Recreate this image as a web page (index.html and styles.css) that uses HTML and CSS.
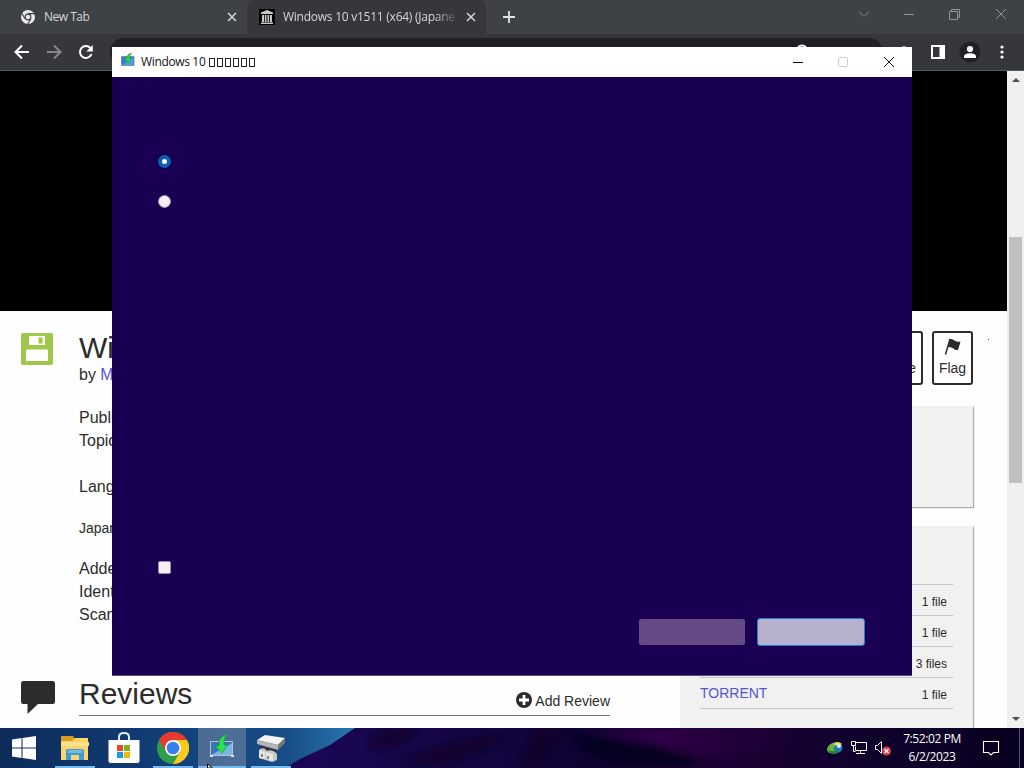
FILE: index.html
```html
<!DOCTYPE html>
<html lang="en">
<head>
  <meta charset="UTF-8">
  <title>Windows 10 Setup</title>
  <link rel="stylesheet" href="styles.css">
</head>
<body>

<div class="browser">
  <div class="tabs">
    <div class="tab">
      <svg class="favicon" width="16" height="16" viewBox="0 0 16 16"><circle cx="8" cy="8" r="7" fill="#e8eaed"/><circle cx="8" cy="8" r="3.4" fill="#3c4043"/><circle cx="8" cy="8" r="2.3" fill="#e8eaed"/><path d="M8 4.6h6.6M5 9.7L1.8 4.2M11 9.7l-3.3 5.6" stroke="#3c4043" stroke-width="1.1"/></svg>
      <span class="tab-title">New Tab</span>
      <svg width="10" height="10" viewBox="0 0 10 10"><path d="M1 1l8 8M9 1L1 9" stroke="#d5d7d9" stroke-width="1.5"/></svg>
    </div>
    <div class="tab active">
      <svg class="favicon" width="16" height="16" viewBox="0 0 16 16"><path fill="#000" d="M0 0h16v16H0z"/><path fill="#c8c8c8" d="M8 1l6 2.5V5H2V3.500zM3 6h2v7H3zM5.800 6h1.700v7H5.800zM8.500 6h1.700v7H8.500zM11 6h2v7h-2zM2 13.500h12V15H2z"/></svg>
      <span class="tab-title fade">Windows 10 v1511 (x64) (Japane</span>
      <svg width="10" height="10" viewBox="0 0 10 10"><path d="M1 1l8 8M9 1L1 9" stroke="#d5d7d9" stroke-width="1.500"/></svg>
    </div>
    <svg class="new-tab" width="12" height="12" viewBox="0 0 12 12"><path d="M6 0v12M0 6h12" stroke="#e2e4e6" stroke-width="1.800"/></svg>
    <div class="window-buttons">
      <svg width="10" height="10" viewBox="0 0 10 10"><path d="M0 2.500l5 5 5-5" fill="none" stroke="#85888a"/></svg>
      <svg width="10" height="10" viewBox="0 0 10 10"><path d="M0 5.500h10" stroke="#929597"/></svg>
      <svg width="11" height="11" viewBox="0 0 11 11"><path d="M.5 2.500h8v8h-8zM2.500 2.500v-2h8v8h-2" fill="none" stroke="#929597"/></svg>
      <svg width="12" height="12" viewBox="0 0 12 12"><path d="M1 1l10 10M11 1L1 11" stroke="#929597"/></svg>
    </div>
  </div>

  <div class="toolbar">
    <svg width="16" height="16" viewBox="0 0 16 16"><path d="M15 8H2M8 1.500L1.500 8 8 14.500" fill="none" stroke="#fff" stroke-width="2"/></svg>
    <svg width="16" height="16" viewBox="0 0 16 16"><path d="M1 8h13M8 1.500L14.500 8 8 14.500" fill="none" stroke="#85888b" stroke-width="2"/></svg>
    <svg width="16" height="16" viewBox="0 0 16 16"><path d="M13.500 10.200A6 6 0 1 1 12.500 4" fill="none" stroke="#fff" stroke-width="2"/><path d="M14.800 1v6.500H8.300z" fill="#fff"/></svg>
    <div class="address">
      <svg width="14" height="14" viewBox="0 0 14 14"><circle cx="7" cy="7" r="5.500" fill="none" stroke="#fff" stroke-width="2"/></svg>
    </div>
    <svg class="extensions" width="16" height="16" viewBox="0 0 16 16"><path d="M1 4h4a2 2 0 0 1 4 0h4v4a2 2 0 0 1 0 4v3H1z" fill="#dfe1e4"/></svg>
    <svg width="14" height="14" viewBox="0 0 14 14"><path d="M1 1h12v12H1z" fill="none" stroke="#fff" stroke-width="2"/><path d="M8.500 1H13v12H8.500z" fill="#fff"/></svg>
    <svg class="profile" width="22" height="22" viewBox="0 0 22 22"><circle cx="11" cy="11" r="10.500" fill="#202124"/><circle cx="11" cy="8" r="3.100" fill="#fff"/><path d="M5 17v-1.500c0-2.200 3-3.300 6-3.300s6 1.100 6 3.300V17z" fill="#fff"/></svg>
    <svg class="menu" width="4" height="14" viewBox="0 0 4 14"><circle cx="2" cy="2" r="1.600" fill="#fff"/><circle cx="2" cy="7" r="1.600" fill="#fff"/><circle cx="2" cy="12" r="1.600" fill="#fff"/></svg>
  </div>

  <div class="viewport">
    <div class="page">
      <div class="player"></div>
      <div class="columns">
        <div class="main">
          <svg class="floppy" width="32" height="32" viewBox="0 0 32 32"><rect width="32" height="32" rx="2" fill="#a0c64a"/><path d="M8 3h16v9H8zM5 17.500q0-1 1-1h20q1 0 1 1V28H5z" fill="#fff"/><path d="M17.500 4.500h4v6h-4z" fill="#a0c64a"/></svg>
          <div class="details">
            <h1>Wi</h1>
            <p class="byline">by <a>M</a></p>
            <p>Publi</p>
            <p>Topic</p>
            <p class="language">Lang</p>
            <p class="description">Japan</p>
            <p>Adde</p>
            <p>Ident</p>
            <p>Scan</p>
          </div>
          <svg class="bubble" width="36" height="34" viewBox="0 0 36 34"><path d="M2.500 0h29q2.500 0 2.500 2.500v18q0 2.500-2.500 2.500H17L6.500 33V23h-4Q0 23 0 20.500v-18Q0 0 2.500 0z" fill="#2c2c2c"/></svg>
          <div class="reviews">
            <h1>Reviews</h1>
            <div class="add-review">
              <svg width="16" height="16" viewBox="0 0 16 16"><circle cx="8" cy="8" r="8" fill="#2c2c2c"/><path d="M8 3v10M3 8h10" stroke="#fff" stroke-width="2.800"/></svg>
              <span>Add Review</span>
            </div>
          </div>
        </div>
        <div class="side">
          <div class="actions">
            <div class="action favorite">e</div>
            <div class="action">
              <svg width="18" height="18" viewBox="0 0 18 18"><path d="M6 1L1.500 16.500" stroke="#2c2c2c" stroke-width="1.500"/><path d="M6 1q2.500-.5 4.500 1.500 2 1.800 6 1.200L14 12q-2.700.5-4.700-1.500Q7 8.500 3.700 9z" fill="#2c2c2c"/></svg>
              <span>Flag</span>
            </div>
          </div>
          <div class="panel views"></div>
          <div class="panel downloads">
            <div class="row">1 file</div>
            <div class="row">1 file</div>
            <div class="row">3 files</div>
            <div class="row last"><a>TORRENT</a><span>1 file</span></div>
          </div>
        </div>
        <span class="speck"></span>
      </div>
    </div>
    <div class="scrollbar">
      <span class="arrow up"></span>
      <span class="thumb"></span>
      <span class="arrow down"></span>
    </div>
  </div>
</div>

<div class="dialog">
  <div class="titlebar">
    <svg width="14" height="14" viewBox="0 0 14 14"><path d="M.5 3.500h12.500v9H.5z" fill="#2f7fcb" stroke="#6f93b5"/><path d="M1 12l11-7v7z" fill="#4fa3dc"/><path d="M10.500 0Q6 1 6 5H3.500l3.500 5 3.500-4.500H8.500Q8.500 2 10.500 0z" fill="#35d04a" stroke="#21923a" stroke-width=".5"/></svg>
    <span class="caption">Windows 10</span>
    <span class="boxes"><i></i><i></i><i></i><i></i><i></i><i></i></span>
    <div class="caption-buttons">
      <svg width="10" height="12" viewBox="0 0 10 12"><path d="M0 6.500h10" stroke="#000"/></svg>
      <svg width="10" height="12" viewBox="0 0 10 12"><rect x=".5" y="1.500" width="9" height="9" rx="1" fill="none" stroke="#ccc"/></svg>
      <svg width="12" height="12" viewBox="0 0 12 12"><path d="M1 1l10 10M11 1L1 11" stroke="#111"/></svg>
    </div>
  </div>
  <div class="dialog-body">
    <span class="radio checked"></span>
    <span class="radio"></span>
    <span class="checkbox"></span>
    <div class="dialog-buttons">
      <span class="btn back"></span>
      <span class="btn next"></span>
    </div>
  </div>
</div>

<div class="taskbar">
  <svg class="wallpaper" width="1024" height="40" viewBox="0 0 1024 40">
    <defs>
      <linearGradient id="sky"><stop offset="0" stop-color="#0c2b59"/><stop offset=".45" stop-color="#123e77"/><stop offset=".8" stop-color="#184d87"/><stop offset="1" stop-color="#2a7ab2"/></linearGradient>
      <linearGradient id="rock"><stop offset="0" stop-color="#1c0759"/><stop offset=".18" stop-color="#160648"/><stop offset=".3" stop-color="#13043f"/><stop offset=".42" stop-color="#0d0230"/><stop offset=".52" stop-color="#1c0036"/><stop offset=".62" stop-color="#1b0035"/><stop offset=".78" stop-color="#0f022c"/><stop offset="1" stop-color="#080020"/></linearGradient>
      <linearGradient id="glow"><stop offset="0" stop-color="#2c004b" stop-opacity="0"/><stop offset=".4" stop-color="#300047"/><stop offset="1" stop-color="#26003d" stop-opacity="0"/></linearGradient>
      <filter id="soft" x="-10%" y="-30%" width="120%" height="160%"><feGaussianBlur stdDeviation="4"/></filter>
    </defs>
    <path d="M0 0h360v40H0z" fill="url(#sky)"/>
    <path d="M285 40L300 31 330 17 355 0H1024V40z" fill="url(#rock)"/>
    <g filter="url(#soft)">
      <path d="M560 0h240v16l-100 12-50-13z" fill="url(#glow)"/>
      <path d="M370 8l25-8h25l-22 18-28 4zM400 32l55-18 60-9-35 20-45 15zM515 40l20-40h32l-12 12-15 28z" fill="#0b0225" opacity=".75"/>
      <path d="M570 4l90 14 40 12-10 10h-65l-45-20z" fill="#07021d" opacity=".75"/>
    </g>
  </svg>

  <div class="apps">
    <div class="app">
      <svg width="24" height="24" viewBox="0 0 24 24"><path d="M0 3.500L9.500 2v9.500H0zM10.500 1.900L24 0v11.500H10.500zM0 12.500h9.500V22L0 20.500zM10.500 12.500H24V24l-13.500-1.900z" fill="#fff"/></svg>
    </div>
    <div class="app running">
      <svg width="30" height="26" viewBox="0 0 30 26"><path d="M1 1h12l2 3h13v5H1z" fill="#d69b23"/><path d="M1 6h11l3-3h13v22H1z" fill="#fbd56b"/><path d="M1 7h28v4H1z" fill="#ffe08a"/><path d="M6 25v-9q0-2 2-2h14q2 0 2 2v9h-5v-5h-8v5z" fill="#3f9bd8"/><path d="M8 15h14v3H8z" fill="#78b9e4"/></svg>
    </div>
    <div class="app">
      <svg width="32" height="32" viewBox="0 0 32 32"><path d="M11 9V5q0-4 5-4t5 4v4" fill="none" stroke="#d9ecf8" stroke-width="2"/><path d="M.5 8h31v21q0 2-2 2h-27q-2 0-2-2z" fill="#fff"/><path d="M9 13h6v6H9z" fill="#e74c24"/><path d="M16 13h6v6h-6z" fill="#76b51b"/><path d="M9 20h6v6H9z" fill="#159ee5"/><path d="M16 20h6v6h-6z" fill="#f6b411"/></svg>
    </div>
    <div class="app running">
      <svg width="32" height="32" viewBox="0 0 32 32"><circle cx="16" cy="16" r="16" fill="#2f9e4a"/><path d="M16 8h13.900A16 16 0 0 1 16 32l7-12z" fill="#fcc91f"/><path d="M2.100 8L9 20l7-12h13.900A16 16 0 0 0 2.100 8z" fill="#e33b2e"/><circle cx="16" cy="16" r="8" fill="#fff"/><circle cx="16" cy="16" r="6.300" fill="#3b7ded"/></svg>
    </div>
    <div class="app running current">
      <svg width="26" height="26" viewBox="0 0 26 26"><path d="M1.500 8.500h22v14h-22z" fill="#3975b8" stroke="#b6c4d1"/><path d="M2 22L23 10v12z" fill="#79b6e5"/><path d="M1 22h3v2H1zM22 22h3v2h-3z" fill="#dce4ea"/><path d="M18 1Q9 4 10 13H6l7 7 6-8h-4Q14 6 18 1z" fill="#2ce34e" stroke="#169b36" stroke-width=".7"/></svg>
    </div>
    <div class="app running">
      <svg width="30" height="28" viewBox="0 0 30 28"><path d="M1 6L9 1l20 3-7 7z" fill="#f3f3f1"/><path d="M1 6l21 5v5L1 10z" fill="#b5b5b3"/><path d="M22 11l7-7v5l-7 7z" fill="#777"/><path d="M5 12l16 4v2L5 15z" fill="#353535"/><path d="M3 16q3-3 6-1l2 2q4-2 8 1l2 2v6l-5 2-13-4z" fill="#c9c9c5"/><path d="M3 16l6 2v7l-6-1zM10 18l7 2v7l-7-2z" fill="#e7e6e1"/><path d="M6 20v3M12 22v3" stroke="#666" stroke-width="1.500"/></svg>
    </div>
  </div>

  <div class="tray">
    <svg width="18" height="16" viewBox="0 0 18 16"><ellipse cx="10" cy="7.500" rx="6.500" ry="5.500" fill="#247bc4"/><path d="M1 10q0-5 6-7l4 1-4 4 3 5q-7 2-9-3z" fill="#68b83d"/><path d="M7 4q5-4 9 0l-4 2z" fill="#f1db54"/><path d="M2 10q5 3 12-1l-4 5q-6 0-8-4z" fill="#207f35"/><circle cx="13" cy="6" r="2" fill="#d8edf6"/></svg>
    <svg width="18" height="16" viewBox="0 0 18 16"><path d="M5.500 2.500h11v8h-11v-4M10.500 10.500v3M6 13.500h9M1.500 1.500h4v4h-4zM3.500 5.500v6h2" fill="none" stroke="#fff"/></svg>
    <svg width="18" height="16" viewBox="0 0 18 16"><path d="M1.500 5.500h2l4-4v12l-4-4h-2z" fill="none" stroke="#fff"/><circle cx="12.500" cy="11" r="4.500" fill="#d64047"/><path d="M10.500 9l4 4M14.500 9l-4 4" stroke="#fff" stroke-width="1.300"/></svg>
    <div class="clock"><span>7:52:02 PM</span><span>6/2/2023</span></div>
    <svg class="notifications" width="18" height="18" viewBox="0 0 18 18"><path d="M1.500 2.500h15v11h-5L9 16l-2.500-2.500h-5z" fill="none" stroke="#fff" stroke-width="1.100"/></svg>
  </div>
  <span class="show-desktop"></span>
  <svg class="cursor" width="8" height="4" viewBox="0 0 8 4"><path d="M.5 0v4h5z" fill="#fff" stroke="#000"/></svg>
</div>

</body>
</html>
```
FILE: styles.css
```css
* {
  box-sizing: border-box;
}
body {
  margin: 0;
  width: 1024px;
  height: 768px;
  overflow: hidden;
  position: relative;
  display: flex;
  flex-direction: column;
  font-family: "Liberation Sans", Arial, sans-serif;
  color: #2c2c2c;
}
svg {
  display: block;
  flex: none;
}
h1, p {
  margin: 0;
  font-weight: normal;
}
a {
  color: #5257d6;
}

/* browser */
.browser {
  height: 728px;
  display: flex;
  flex-direction: column;
}
.tabs {
  height: 34px;
  flex: none;
  display: flex;
  align-items: center;
  background: #3e4245;
}
.tab {
  width: 247px;
  height: 34px;
  padding: 0 10px 0 20px;
  display: flex;
  align-items: center;
}
.tab.active {
  width: 239px;
  padding: 0 10px 0 12px;
  background: #36373a;
  border-radius: 8px 8px 0 0;
}
.tab-title {
  flex: 1;
  margin-left: 8px;
  padding-bottom: 1px;
  font: 12px "Open Sans", sans-serif;
  letter-spacing: -0.25px;
  color: #d5d7d9;
  white-space: nowrap;
}
.tab:first-child .tab-title {
  letter-spacing: -0.5px;
}
.fade {
  -webkit-mask-image: linear-gradient(90deg, #000 150px, transparent 177px);
  mask-image: linear-gradient(90deg, #000 150px, transparent 177px);
}
.new-tab {
  margin-left: 17px;
}
.window-buttons {
  margin-left: auto;
  padding: 0 17px 6px 0;
  display: flex;
  align-items: center;
  gap: 35px;
}
.toolbar {
  height: 37px;
  flex: none;
  padding: 0 19px 0 14px;
  display: flex;
  align-items: center;
  gap: 16px;
  background: #36373a;
  border-bottom: 1px solid #55575a;
}
.address {
  width: 773px;
  height: 28px;
  flex: none;
  padding: 6px 0 0 685px;
  border-radius: 14px;
  background: #202124;
}
.extensions {
  margin-left: -2px;
  margin-right: 2px;
}
.profile {
  margin: 0 4px 0 -2px;
}
.menu {
  margin-left: -1px;
}
.viewport {
  flex: 1;
  min-height: 0;
  display: flex;
}
.page {
  width: 1007px;
  overflow: hidden;
  background: #fefefe;
}
.player {
  height: 240px;
  background: #000;
}
.columns {
  display: flex;
  padding-top: 20px;
}
.main {
  width: 680px;
  display: grid;
  grid-template-columns: 58px 531px;
  grid-template-rows: 344px auto;
  padding-left: 21px;
}
.floppy {
  margin-top: 2px;
}
.bubble {
  margin-top: 6px;
}
h1 {
  font-size: 30px;
  line-height: 34px;
}
.details h1 {
  line-height: 33px;
  margin-bottom: 1px;
}
.details p {
  font-size: 16px;
  line-height: 23px;
}
.details .byline {
  line-height: 20px;
  margin-bottom: 21px;
}
.details .language {
  margin-top: 23px;
}
.details .description {
  margin: 19px 0 17px;
  font-size: 14px;
}
.reviews {
  height: 41px;
  display: flex;
  justify-content: space-between;
  border-bottom: 1px solid #777;
  padding-top: 2px;
}
.add-review {
  display: flex;
  align-items: center;
  gap: 3px;
  height: 16px;
  margin-top: 15px;
  font-size: 14px;
}
.add-review span {
  padding-top: 1px;
}
.side {
  width: 293px;
}
.actions {
  display: flex;
  justify-content: flex-end;
  gap: 9px;
}
.action {
  width: 41px;
  height: 54px;
  display: flex;
  flex-direction: column;
  align-items: center;
  padding-top: 5px;
  border: 2px solid #2c2c2c;
  border-radius: 3px;
  font-size: 14px;
}
.action span {
  margin-top: 4px;
}
.favorite {
  align-items: flex-end;
  padding: 27px 5px 0 0;
}
.panel {
  background: #f1f1f1;
  box-shadow: 1px 1px 1px #aaa;
}
.views {
  height: 101px;
  margin-top: 21px;
}
.downloads {
  height: 220px;
  margin-top: 19px;
  padding: 58px 20px 0;
}
.row {
  height: 31px;
  display: flex;
  justify-content: flex-end;
  align-items: center;
  padding: 4px 6px 0 0;
  border-top: 1px solid #c5c5c5;
  font-size: 12px;
}
.last {
  height: 32px;
  border-bottom: 1px solid #c5c5c5;
}
.last a {
  margin: 0 auto 5px 0;
  font-size: 14px;
}
.speck {
  width: 1px;
  height: 1px;
  margin: 8px 0 0 15px;
  background: #444;
}
.scrollbar {
  width: 17px;
  display: flex;
  flex-direction: column;
  align-items: center;
  background: #f0f0f0;
}
.thumb {
  width: 13px;
  height: 246px;
  margin-top: 155px;
  background: #c0c0c0;
}
.arrow {
  border: 4px solid transparent;
}
.up {
  margin-top: 3px;
  border-bottom-color: #505050;
}
.down {
  margin-top: auto;
  margin-bottom: 3px;
  border-top-color: #505050;
}

/* setup window */
.dialog {
  position: absolute;
  left: 112px;
  top: 47px;
  width: 800px;
  height: 628px;
  box-shadow: 0 1px 0 #5b4a7c;
}
.titlebar {
  height: 30px;
  padding: 0 17px 0 9px;
  display: flex;
  align-items: center;
  background: #fff;
}
.titlebar > svg {
  margin-bottom: 4px;
}
.caption {
  margin-left: 6px;
  padding-bottom: 1px;
  font: 12px "Open Sans", sans-serif;
  letter-spacing: -0.35px;
  color: #111;
}
.boxes {
  display: flex;
  gap: 2px;
  margin: 0 0 0 4px;
}
.boxes i {
  width: 6px;
  height: 9px;
  border: 1px solid #222;
}
.caption-buttons {
  margin-left: auto;
  padding-bottom: 1px;
  display: flex;
  gap: 35px;
}
.dialog-body {
  height: 598px;
  padding: 78px 47px 29px 46px;
  display: flex;
  flex-direction: column;
  background: #190052;
}
.radio {
  width: 13px;
  height: 13px;
  border: 1px solid #9c8daf;
  border-radius: 50%;
  background: #f5eff5;
}
.radio.checked {
  margin-bottom: 27px;
  border: 4px solid #0c60b4;
  background: #fff;
}
.checkbox {
  width: 13px;
  height: 13px;
  margin-top: auto;
  border: 1px solid #9c8daf;
  border-radius: 2px;
  background: #f5eff5;
}
.dialog-buttons {
  display: flex;
  justify-content: flex-end;
  align-items: center;
  gap: 12px;
  margin-top: 44px;
}
.btn {
  width: 106px;
  height: 26px;
  border-radius: 2px;
  background: #644b87;
}
.btn.next {
  width: 108px;
  height: 28px;
  border: 1px solid #2879d0;
  border-radius: 3px;
  background: #b7b0ca;
}

/* taskbar */
.taskbar {
  height: 40px;
  position: relative;
  display: flex;
  justify-content: space-between;
  background: #0d0228;
}
.wallpaper {
  position: absolute;
  left: 0;
  top: 0;
}
.apps {
  position: relative;
  display: flex;
  gap: 1px;
}
.app {
  width: 48px;
  height: 40px;
  display: flex;
  align-items: center;
  justify-content: center;
}
.app:first-child {
  width: 50px;
  padding-right: 3px;
}
.running {
  background: linear-gradient(#76b9ed, #76b9ed) center bottom / 40px 2px no-repeat;
}
.current {
  background-color: rgba(160, 170, 185, 0.4);
  background-size: 48px 2px;
  padding-bottom: 4px;
}
.tray {
  position: relative;
  display: flex;
  align-items: center;
  padding-right: 24px;
  gap: 6px;
}
.clock {
  width: 64px;
  margin-left: 2px;
  display: flex;
  flex-direction: column;
  align-items: center;
  font: 12px/18px "Open Sans", sans-serif;
  letter-spacing: -0.4px;
  color: #fff;
  white-space: nowrap;
}
.notifications {
  margin-left: 12px;
}
.show-desktop {
  position: absolute;
  right: 4px;
  top: 0;
  width: 1px;
  height: 40px;
  background: #59546b;
}
.cursor {
  position: absolute;
  left: 207px;
  bottom: 0;
}
```
